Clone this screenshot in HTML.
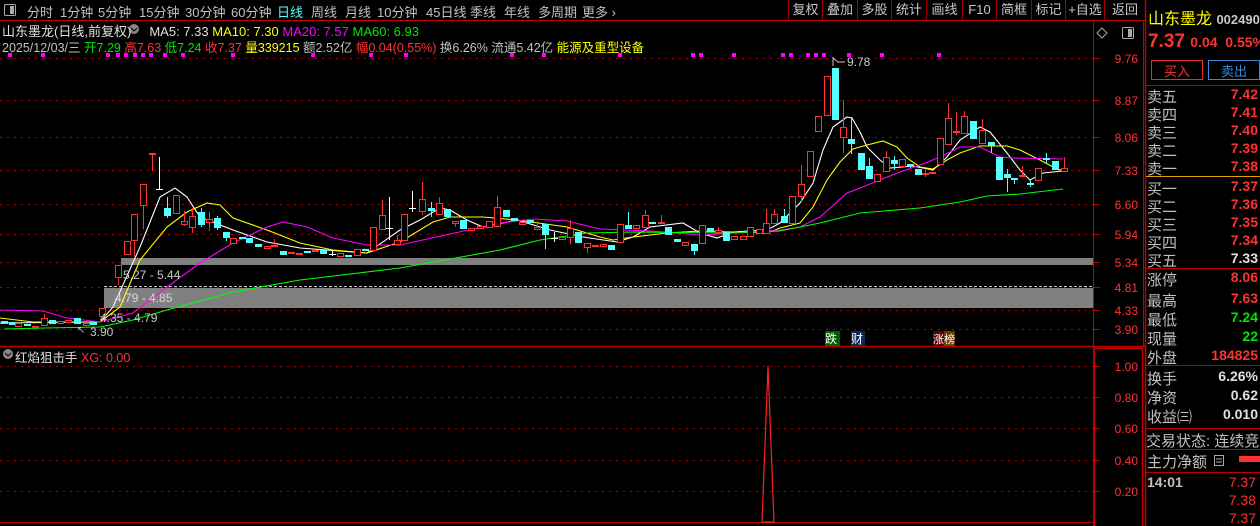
<!DOCTYPE html>
<html><head><meta charset="utf-8"><style>
*{margin:0;padding:0;box-sizing:border-box}
body{width:1260px;height:526px;background:#000;overflow:hidden;font-family:"Liberation Sans","Noto Sans CJK SC",sans-serif;color:#c0c0c0;position:relative}
.a{position:absolute;white-space:nowrap}
.t{font-size:13px;top:2px}
.rp{font-size:15px}
.r{color:#ff3232}.g{color:#00e600}.w{color:#e0e0e0}.y{color:#ffff00}.m{color:#ff00ff}.c{color:#54ffff}
.btn{position:absolute;top:0;height:20px;border-left:1px solid #a00000;font-size:13px;line-height:20px;text-align:center;color:#c8c8c8}
</style></head><body>
<svg id="s" width="1260" height="526" style="position:absolute;left:0;top:0">
<line x1="0" y1="20.5" x2="1145" y2="20.5" stroke="#c00000"/>
<g id="grid" stroke="#b00000" stroke-dasharray="2,5"></g>
<rect x="121" y="258" width="972" height="7" fill="#808080"/>
<line x1="104" y1="286.5" x2="1093" y2="286.5" stroke="#c8c8c8" stroke-dasharray="3,2"/>
<rect x="104" y="288" width="989" height="20" fill="#808080"/>
<line x1="0" y1="346.5" x2="1145" y2="346.5" stroke="#c00000" stroke-width="1.5"/>
<line x1="1093.5" y1="20" x2="1093.5" y2="526" stroke="#c00000"/>
<rect x="1094.5" y="348.5" width="48" height="180" fill="none" stroke="#c00000" stroke-width="1.5"/>
<line x1="1143.5" y1="20" x2="1143.5" y2="346" stroke="#c00000"/>
<line x1="1145.5" y1="0" x2="1145.5" y2="526" stroke="#c00000" stroke-width="1.5"/>
<line x1="0" y1="522.5" x2="1093" y2="522.5" stroke="#c00000"/>
<polygon points="762,522 768,366 774,522" fill="none" stroke="#ff2020" stroke-width="1.2"/>
<g id="ma" fill="none" stroke-width="1.1"></g>
<g id="cd"></g>
<g id="dots" fill="#ff00ff"></g>
<g id="ticks" stroke="#c00000"></g>
<g font-size="12" fill="#ff3232" text-anchor="end" font-family="Liberation Sans,sans-serif">
<text x="1138" y="63">9.76</text><text x="1138" y="105">8.87</text><text x="1138" y="142">8.06</text><text x="1138" y="175">7.33</text><text x="1138" y="209">6.60</text><text x="1138" y="239">5.94</text><text x="1138" y="267">5.34</text><text x="1138" y="292">4.81</text><text x="1138" y="315">4.33</text><text x="1138" y="334">3.90</text>
<text x="1138" y="371">1.00</text><text x="1138" y="402">0.80</text><text x="1138" y="433">0.60</text><text x="1138" y="465">0.40</text><text x="1138" y="496">0.20</text>
</g>
<g font-size="12" fill="#c8c8c8" font-family="Liberation Sans,sans-serif">
<text x="123" y="279">5.27 - 5.44</text><text x="115" y="302" fill="#d8d8d8">4.79 - 4.85</text><text x="100" y="322">4.35 - 4.79</text><text x="90" y="336">3.90</text><text x="77" y="333" font-size="10">↖</text>
<text x="847" y="66">9.78</text><polyline points="833,58 838,62 845,62" fill="none" stroke="#c8c8c8"/><line x1="833" y1="57" x2="833" y2="66" stroke="#c8c8c8"/>
</g>
<rect x="825" y="331" width="15" height="15" fill="#006000"/><rect x="851" y="331" width="14" height="15" fill="#0a2a5a"/><rect x="933" y="331" width="11" height="15" fill="#600000"/><rect x="944" y="331" width="11" height="15" fill="#6a3a00"/>
<text x="825" y="343" font-size="12" fill="#fff" font-family="Noto Sans CJK SC,sans-serif">跌</text><text x="851" y="343" font-size="12" fill="#fff" font-family="Noto Sans CJK SC,sans-serif">财</text><text x="933" y="343" font-size="11" fill="#fff" font-family="Noto Sans CJK SC,sans-serif">涨榜</text>
<rect x="4.5" y="4.5" width="11" height="11" fill="none" stroke="#aaa" rx="1"/><rect x="10" y="6" width="4" height="8" fill="#aaa"/>
<rect x="1122.5" y="27.5" width="11" height="11" fill="none" stroke="#aaa" rx="1"/><rect x="1128" y="29" width="4" height="8" fill="#aaa"/>
<path d="M1097,33 L1102,28 L1107,33 L1102,38Z" fill="none" stroke="#aaa"/>
<circle cx="134" cy="29" r="5" fill="#888"/><path d="M131,28 L134,31 L137,28" stroke="#000" fill="none"/>
<circle cx="8" cy="354" r="5" fill="#888"/><path d="M5,353 L8,356 L11,353" stroke="#000" fill="none"/>
<line x1="1146" y1="85.5" x2="1260" y2="85.5" stroke="#c00000"/>
<line x1="1146" y1="176.5" x2="1260" y2="176.5" stroke="#e0a000"/>
<line x1="1146" y1="268.5" x2="1260" y2="268.5" stroke="#c00000"/>
<line x1="1146" y1="365.5" x2="1260" y2="365.5" stroke="#c00000"/>
<line x1="1146" y1="428.5" x2="1260" y2="428.5" stroke="#c00000"/>
<line x1="1146" y1="449.5" x2="1260" y2="449.5" stroke="#c00000"/>
<line x1="1146" y1="472.5" x2="1260" y2="472.5" stroke="#c00000"/>
<rect x="1151.5" y="60.5" width="51" height="19" fill="none" stroke="#e03030"/>
<rect x="1208.5" y="60.5" width="51" height="19" fill="none" stroke="#3a8ad8"/>
<rect x="1214.5" y="455.5" width="9" height="10" fill="none" stroke="#aaa"/><line x1="1216" y1="459" x2="1222" y2="459" stroke="#aaa"/><line x1="1216" y1="462" x2="1222" y2="462" stroke="#aaa"/>
<rect x="1239" y="456" width="21" height="6" fill="#ff3030"/>
</svg>
<span class="a t" style="left:27px">分时</span><span class="a t" style="left:60px">1分钟</span><span class="a t" style="left:98px">5分钟</span><span class="a t" style="left:139px">15分钟</span><span class="a t" style="left:185px">30分钟</span><span class="a t" style="left:231px">60分钟</span><span class="a t c" style="left:277px">日线</span><span class="a t" style="left:311px">周线</span><span class="a t" style="left:345px">月线</span><span class="a t" style="left:377px">10分钟</span><span class="a t" style="left:426px">45日线</span><span class="a t" style="left:470px">季线</span><span class="a t" style="left:504px">年线</span><span class="a t" style="left:538px">多周期</span><span class="a t" style="left:582px">更多 ›</span>
<div class="btn" style="left:788px;width:34px">复权</div><div class="btn" style="left:822px;width:35px">叠加</div><div class="btn" style="left:857px;width:34px">多股</div><div class="btn" style="left:891px;width:35px">统计</div><div class="btn" style="left:926px;width:36px">画线</div><div class="btn" style="left:962px;width:34px">F10</div><div class="btn" style="left:996px;width:35px">简框</div><div class="btn" style="left:1031px;width:34px">标记</div><div class="btn" style="left:1065px;width:39px">+自选</div><div class="btn" style="left:1104px;width:41px">返回</div>
<div class="a" style="left:2px;top:21px;font-size:13px"><span class="w">山东墨龙(日线,前复权)</span> &nbsp; &nbsp; <span class="w">MA5: 7.33</span> <span class="y">MA10: 7.30</span> <span class="m">MA20: 7.57</span> <span class="g">MA60: 6.93</span></div>
<div class="a" style="left:2px;top:37px;font-size:12.5px">2025/12/03/三 <span class="g">开7.29</span> <span class="r">高7.63</span> <span class="g">低7.24</span> <span class="r">收7.37</span> <span class="y">量339215</span> 额2.52亿 <span class="r">幅0.04(0.55%)</span> 换6.26% 流通5.42亿 <span class="y">能源及重型设备</span></div>
<div class="a" style="left:15px;top:347px;font-size:12.5px"><span class="w">红焰狙击手</span> <span class="r">XG: 0.00</span></div>
<div class="a y" style="left:1148px;top:5px;font-size:16px">山东墨龙 <span style="color:#c8c8c8;font-size:13px;font-weight:bold">002490</span></div>
<div class="a r" style="left:1148px;top:31px;font-size:19px;font-weight:bold">7.37 <span style="font-size:14px">0.04 &nbsp;0.55%</span></div>
<div class="a r" style="left:1164px;top:61px;font-size:13px">买入</div><div class="a" style="left:1221px;top:61px;font-size:13px;color:#3a8ad8">卖出</div>
<div id="rows"></div>
<script>
var s=document.getElementById('s'),NS='http://www.w3.org/2000/svg';
function el(p,t,a){var e=document.createElementNS(NS,t);for(var k in a)e.setAttribute(k,a[k]);document.getElementById(p).appendChild(e);return e}
[58,100,137,170,204,234,262,287,310,329,366,397,428,460,491].forEach(function(y){el('grid','line',{x1:0,y1:y+.5,x2:1093,y2:y+.5});el('ticks','line',{x1:1093,y1:y+.5,x2:1100,y2:y+.5})});
[10,43,108,118,126,135,143,151,165,183,233,313,371,406,512,544,620,693,701,734,783,791,808,816,824,849,882,939].forEach(function(x){el('dots','rect',{x:x-2,y:53,width:4,height:4})});
var C=[[4,321,324,0,0,'c'],[12,322,325,0,0,'c'],[18,323,327,0,0,'r'],[27,324,326,0,0,'c'],[35,326,328,0,0,'f'],[44,318,326,314,0,'r'],[52,320,324,0,0,'c'],[60,321,324,0,0,'r'],[68,320,323,0,0,'r'],[77,318,324,0,0,'c'],[86,323,326,0,0,'f'],[93,322,325,0,0,'c'],[102,308,317,0,0,'r'],[118,265,278,0,285,'r'],[127,241,255,0,0,'r'],[134,214,241,0,257,'r'],[143,184,206,0,229,'r'],[152,153,154,0,171,'r'],[159,189,189,157,189,'w'],[167,208,216,197,218,'c'],[176,195,214,0,0,'r'],[184,221,225,211,226,'r'],[192,216,228,208,233,'r'],[201,212,225,208,227,'c'],[209,219,223,212,231,'r'],[217,218,228,216,230,'c'],[226,232,238,0,241,'c'],[233,238,244,0,0,'r'],[242,237,239,0,0,'c'],[249,238,243,0,0,'c'],[258,244,247,0,0,'c'],[267,246,249,0,0,'r'],[274,245,247,239,0,'r'],[283,251,255,0,0,'c'],[291,252,254,0,0,'r'],[299,253,255,0,0,'f'],[307,251,252,0,0,'c'],[315,250,252,0,0,'r'],[323,250,254,0,0,'c'],[332,254,254,251,256,'w'],[340,253,257,0,0,'r'],[348,255,256,0,0,'c'],[357,249,256,0,0,'r'],[365,249,250,0,0,'c'],[373,227,251,0,0,'r'],[382,215,230,200,0,'r'],[389,228,228,197,240,'w'],[397,240,245,235,0,'r'],[404,214,241,0,0,'r'],[412,208,208,191,212,'w'],[422,199,212,182,215,'r'],[431,208,211,202,217,'c'],[439,203,215,197,0,'r'],[447,209,217,0,0,'c'],[455,221,224,0,227,'r'],[463,220,229,0,0,'c'],[471,228,231,0,0,'r'],[480,226,229,0,0,'r'],[489,221,228,0,0,'r'],[497,207,227,196,0,'r'],[506,210,217,0,0,'c'],[514,218,221,0,0,'c'],[522,222,225,0,0,'r'],[530,220,223,0,0,'c'],[537,227,230,221,0,'r'],[545,224,235,0,249,'c'],[554,238,238,232,242,'w'],[562,237,240,0,0,'r'],[570,228,238,220,244,'r'],[578,232,243,0,0,'c'],[587,243,248,0,253,'r'],[595,245,247,0,0,'f'],[603,244,247,0,0,'r'],[611,245,250,0,0,'c'],[620,224,243,0,0,'r'],[628,225,229,212,0,'c'],[636,225,229,0,0,'r'],[645,215,228,210,0,'r'],[652,222,224,0,0,'c'],[661,222,224,215,0,'f'],[668,227,235,0,0,'c'],[677,239,242,0,0,'c'],[685,242,246,0,0,'r'],[694,244,251,0,255,'c'],[702,225,244,0,0,'r'],[710,228,232,0,0,'c'],[718,230,233,227,0,'r'],[726,232,241,0,0,'c'],[734,236,240,0,0,'r'],[743,236,240,0,0,'r'],[750,227,237,0,0,'r'],[759,229,234,0,0,'r'],[766,223,234,209,0,'r'],[774,214,224,209,0,'r'],[784,216,223,209,0,'c'],[792,196,224,0,0,'r'],[801,184,197,165,201,'r'],[810,151,177,0,0,'r'],[818,116,132,0,0,'r'],[827,76,116,0,0,'r'],[835,68,120,0,0,'c'],[843,127,138,100,153,'r'],[851,139,144,117,154,'c'],[861,153,170,0,0,'c'],[869,166,179,158,0,'c'],[877,174,182,0,0,'r'],[886,157,172,151,0,'r'],[894,160,164,156,170,'c'],[902,159,167,0,0,'r'],[910,164,165,0,168,'c'],[918,169,175,0,0,'c'],[925,173,174,170,177,'f'],[932,172,173,0,0,'f'],[940,138,165,0,0,'r'],[948,118,145,103,0,'r'],[956,131,132,112,135,'f'],[964,116,134,111,0,'r'],[973,121,139,0,0,'c'],[982,130,144,119,0,'r'],[991,142,146,0,153,'c'],[999,157,180,0,0,'c'],[1007,174,178,169,192,'c'],[1014,178,179,0,184,'c'],[1022,175,177,166,0,'r'],[1030,183,184,180,187,'c'],[1038,168,181,0,0,'r'],[1046,158,159,153,163,'c'],[1055,161,170,0,0,'c'],[1064,168,172,157,0,'r']];
C.forEach(function(d){var x=d[0],t=d[1],b=d[2],wt=d[3]||t,wb=d[4]||b,k=d[5];
var col=k=='c'?'#54ffff':k=='w'?'#ffffff':'#ff3232';
el('cd','line',{x1:x+.5,y1:wt,x2:x+.5,y2:wb,stroke:col});
if(k=='w'){el('cd','line',{x1:x-3,y1:t+.5,x2:x+4,y2:t+.5,stroke:col});return}
if(b-t<2){el('cd','rect',{x:x-3,y:t,width:7,height:2,fill:col});return}
if(k=='c')el('cd','rect',{x:x-3,y:t,width:7,height:b-t,fill:col});
else el('cd','rect',{x:x-2.5,y:t+.5,width:6,height:b-t-1,fill:'#000',stroke:col});});
var M={'#ffffff':[[0,323],[100,322],[113,307],[140,247],[160,197],[175,188],[187,197],[200,217],[233,230],[267,242],[300,248],[367,253],[400,230],[420,220],[440,208],[450,210],[467,220],[483,227],[517,220],[550,230],[583,237],[617,242],[633,237],[650,227],[683,223],[700,233],[717,238],[733,232],[767,230],[780,223],[800,203],[813,183],[823,150],[833,127],[847,117],[852,118],[860,132],[867,147],[880,160],[890,168],[913,166],[933,170],[947,157],[960,140],[980,127],[990,132],[1007,153],[1020,170],[1030,180],[1043,173],[1063,171]],
'#ffff00':[[0,318],[33,322],[100,322],[120,307],[140,260],[167,227],[187,212],[207,203],[220,205],[233,218],[267,230],[300,243],[333,250],[367,253],[400,242],[433,222],[450,217],[483,217],[517,220],[567,227],[600,237],[613,240],[633,237],[667,233],[700,231],[767,233],[780,228],[800,223],[813,207],[827,180],[840,162],[853,149],[867,145],[883,141],[897,147],[907,158],[920,167],[933,169],[947,160],[960,153],[980,146],[1007,146],[1020,150],[1040,160],[1053,167],[1063,171]],
'#ff00ff':[[0,310],[43,311],[67,318],[100,322],[133,313],[167,287],[200,263],[233,243],[267,227],[283,222],[307,227],[333,238],[367,245],[400,245],[450,234],[500,223],[533,219],[567,221],[600,229],[650,231],[700,235],[733,233],[780,230],[800,227],[820,217],[847,193],[860,188],[880,180],[900,172],[920,165],[940,157],[960,147],[980,147],[1000,157],[1013,158],[1063,159]],
'#00ff00':[[4,329],[45,328],[100,327],[133,320],[167,310],[233,292],[300,280],[400,268],[450,259],[500,250],[540,240],[587,233],[633,232],[733,233],[780,231],[820,223],[860,213],[920,208],[960,202],[987,196],[1020,194],[1063,189]]};
for(var c in M)el('ma','polyline',{points:M[c].map(function(p){return p.join(',')}).join(' '),stroke:c});
var R=[['卖五','7.42',95,'r'],['卖四','7.41',113,'r'],['卖三','7.40',131,'r'],['卖二','7.39',149,'r'],['卖一','7.38',167,'r'],['买一','7.37',187,'r'],['买二','7.36',205,'r'],['买三','7.35',223,'r'],['买四','7.34',241,'r'],['买五','7.33',259,'w'],['涨停','8.06',278,'r'],['最高','7.63',299,'r'],['最低','7.24',318,'g'],['现量','22',337,'g'],['外盘','184825',356,'r'],['换手','6.26%',377,'w'],['净资','0.62',396,'w'],['收益㈢','0.010',415,'w']];
var h='';R.forEach(function(r){h+='<span class="a rp" style="left:1147px;top:'+(r[2]-9)+'px">'+r[0]+'</span><span class="a rp '+r[3]+'" style="right:2px;top:'+(r[2]-9)+'px;font-weight:bold;font-size:14px">'+r[1]+'</span>'});
h+='<span class="a rp" style="left:1146px;top:430px">交易状态: 连续竞价</span><span class="a rp" style="left:1147px;top:451px">主力净额</span>';
h+='<span class="a" style="left:1147px;top:474px;font-size:14px;font-weight:bold">14:01</span>';
[7.37,7.38,7.37].forEach(function(v,i){h+='<span class="a r" style="right:4px;top:'+(474+i*18)+'px;font-size:14px">'+v.toFixed(2)+'</span>'});
document.getElementById('rows').innerHTML=h;
</script>
</body></html>
